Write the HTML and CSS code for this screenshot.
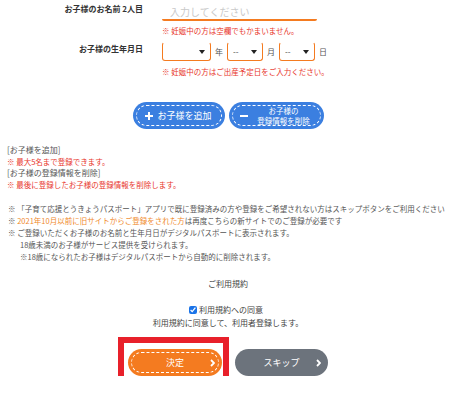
FILE: index.html
```html
<!DOCTYPE html>
<html lang="ja">
<head>
    <meta charset="UTF-8">
    <meta name="viewport" content="width=device-width, initial-scale=1.0">
    <title>お子様情報の登録</title>
    <link rel="stylesheet" href="styles.css">
</head>
<body>
    <div class="page">
        <!-- お子様のお名前 -->
        <div class="form-row">
            <div class="form-label">お子様のお名前 2人目</div>
            <div class="form-field">
                <input class="text-input" type="text" placeholder="入力してください">
                <p class="field-note">※ 妊娠中の方は空欄でもかまいません。</p>
            </div>
        </div>

        <!-- 生年月日 -->
        <div class="form-row birth-row">
            <div class="form-label">お子様の生年月日</div>
            <div class="form-field">
                <div class="date-select">
                    <span class="select-wrap select-year">
                        <select><option value=""></option></select>
                        <span class="select-arrow"></span>
                    </span>
                    <span class="date-unit">年</span>
                    <span class="select-wrap">
                        <select><option value="">--</option></select>
                        <span class="select-arrow"></span>
                    </span>
                    <span class="date-unit">月</span>
                    <span class="select-wrap">
                        <select><option value="">--</option></select>
                        <span class="select-arrow"></span>
                    </span>
                    <span class="date-unit">日</span>
                </div>
                <p class="field-note">※ 妊娠中の方はご出産予定日をご入力ください。</p>
            </div>
        </div>

        <!-- 追加・削除 -->
        <div class="child-buttons">
            <button class="btn-blue btn-add">
                <svg class="btn-icon" width="8" height="8" viewBox="0 0 8 8"><rect x="3" y="0" width="2" height="8" fill="#fff"/><rect x="0" y="3" width="8" height="2" fill="#fff"/></svg>
                <span>お子様を追加</span>
            </button>
            <button class="btn-blue btn-remove">
                <svg class="btn-icon" width="8" height="8" viewBox="0 0 8 8"><rect x="0" y="3" width="8" height="2" fill="#fff"/></svg>
                <span class="btn-lines">お子様の<br>登録情報を削除</span>
            </button>
        </div>

        <div class="child-guide">
            <p>[お子様を追加]</p>
            <p class="note-red">※ 最大5名まで登録できます。</p>
            <p>[お子様の登録情報を削除]</p>
            <p class="note-red">※ 最後に登録したお子様の登録情報を削除します。</p>
        </div>

        <div class="notes">
            <p>※ 「子育て応援とうきょうパスポート」アプリで既に登録済みの方や登録をご希望されない方はスキップボタンをご利用ください</p>
            <p>※ <span class="note-orange">2021年10月以前に旧サイトからご登録をされた方</span>は再度こちらの新サイトでのご登録が必要です</p>
            <p>※ ご登録いただくお子様のお名前と生年月日がデジタルパスポートに表示されます。</p>
            <p class="indent">18歳未満のお子様がサービス提供を受けられます。</p>
            <p class="indent">※18歳になられたお子様はデジタルパスポートから自動的に削除されます。</p>
        </div>

        <!-- 利用規約 -->
        <div class="terms">
            <p class="terms-title">ご利用規約</p>
            <label class="terms-check"><input type="checkbox" checked> 利用規約への同意</label>
            <p class="terms-text">利用規約に同意して、利用者登録します。</p>
        </div>

        <div class="submit-buttons">
            <div class="submit-wrap">
                <button class="btn-submit">決定
                    <svg class="chevron" width="5" height="8" viewBox="0 0 5 8"><polyline points="1,1 4,4 1,7" fill="none" stroke="#fff" stroke-width="1.8"/></svg>
                </button>
                <span class="highlight"></span>
            </div>
            <button class="btn-skip">スキップ
                <svg class="chevron" width="5" height="8" viewBox="0 0 5 8"><polyline points="1,1 4,4 1,7" fill="none" stroke="#fff" stroke-width="1.8"/></svg>
            </button>
        </div>
    </div>
</body>
</html>
```

FILE: styles.css
```css
:root {
    --orange: #f47b20;
    --blue: #3b7fe0;
    --red: #e8362c;
    --gray-btn: #6c737c;
    --text: #4a4a4a;
}
body {
    margin: 0;
    font-family: "Noto Sans CJK JP", "Noto Sans", sans-serif;
    color: var(--text);
    background: #fff;
}
p {
    margin: 0;
}
.page {
    width: 456px;
}

/* フォーム */
.form-row {
    display: flex;
    align-items: flex-start;
}
.birth-row {
    margin-top: 6px;
}
.form-label {
    width: 143px;
    flex-shrink: 0;
    text-align: right;
    font-size: 8px;
    font-weight: bold;
    line-height: 12px;
    color: #333;
    margin-top: 3px;
}
.birth-row .form-label {
    margin-top: 1px;
}
.form-field {
    margin-left: 19px;
}
.text-input {
    display: block;
    width: 155px;
    height: 21px;
    box-sizing: border-box;
    border: none;
    border-bottom: 2px solid var(--orange);
    border-radius: 2px;
    padding: 4px 8px 0;
    font-family: inherit;
    font-size: 10px;
    outline: none;
}
.text-input::placeholder {
    color: #c9c9c9;
}
.field-note {
    font-size: 7.5px;
    line-height: 11px;
    color: var(--red);
    margin-top: 4px;
}
.birth-row .field-note {
    margin-top: 5px;
}
.date-select {
    display: flex;
    align-items: center;
}
.select-wrap {
    position: relative;
    display: inline-block;
}
.select-wrap select {
    display: block;
    -webkit-appearance: none;
    appearance: none;
    width: 36px;
    height: 19px;
    box-sizing: border-box;
    border: 1px solid var(--orange);
    border-top-color: transparent;
    border-radius: 3px;
    background: #fff;
    padding: 0 0 0 5px;
    font-family: inherit;
    font-size: 8px;
    color: #444;
    outline: none;
}
.select-year select {
    width: 49px;
}
.select-arrow {
    position: absolute;
    right: 6px;
    top: 8px;
    width: 0;
    height: 0;
    border-left: 3px solid transparent;
    border-right: 3px solid transparent;
    border-top: 4px solid #222;
}
.date-unit {
    font-size: 8px;
    color: #555;
    margin: 0 4px;
}

/* 青ボタン */
.child-buttons {
    display: flex;
    justify-content: center;
    gap: 4px;
    margin-top: 25px;
}
.btn-blue, .btn-submit, .btn-skip {
    position: relative;
    display: flex;
    align-items: center;
    height: 27px;
    border: none;
    border-radius: 14px;
    color: #fff;
    font-family: inherit;
    cursor: pointer;
    padding: 0;
}
.btn-blue {
    background: var(--blue);
}
.btn-blue::before, .btn-submit::before {
    content: "";
    position: absolute;
    inset: 3px;
    border: 1px dashed #fff;
    border-radius: 11px;
}
.btn-add {
    width: 92px;
    justify-content: center;
    gap: 4px;
    font-size: 9px;
}
.btn-remove {
    width: 95px;
    padding-left: 11px;
}
.btn-lines {
    flex: 1;
    text-align: center;
    font-size: 7.5px;
    line-height: 10px;
    padding-right: 4px;
}

/* 説明 */
.child-guide {
    margin-top: 15px;
    padding-left: 7px;
    font-size: 8px;
    line-height: 11.6px;
    color: #555;
}
.note-red {
    font-size: 7.5px;
    color: var(--red);
}
.notes {
    margin-top: 13px;
    padding-left: 8px;
    font-size: 7.5px;
    line-height: 12px;
    color: #555;
    white-space: nowrap;
}
.notes .indent {
    padding-left: 12px;
}
.note-orange {
    color: #f08a2c;
}

/* 利用規約 */
.terms {
    margin-top: 15px;
    text-align: center;
    font-size: 8px;
    line-height: 12px;
    color: #444;
}
.terms-check {
    display: flex;
    justify-content: center;
    align-items: center;
    gap: 2px;
    margin-top: 14px;
    padding-right: 4px;
}
.terms-check input {
    width: 8px;
    height: 8px;
    margin: 0;
    accent-color: #1a73e8;
}
.terms-text {
    margin-top: 1px;
}

/* 決定・スキップ */
.submit-buttons {
    display: flex;
    justify-content: center;
    gap: 13px;
    margin-top: 20px;
}
.submit-wrap {
    position: relative;
}
.btn-submit {
    width: 94px;
    justify-content: center;
    background: var(--orange);
    font-size: 9px;
}
.btn-skip {
    width: 93px;
    justify-content: center;
    background: var(--gray-btn);
    font-size: 9px;
}
.chevron {
    position: absolute;
    right: 7px;
    top: 10px;
}
.highlight {
    position: absolute;
    left: -10px;
    right: -7px;
    top: -12px;
    bottom: -12px;
    border: 6px solid #e8202a;
    pointer-events: none;
}
```
